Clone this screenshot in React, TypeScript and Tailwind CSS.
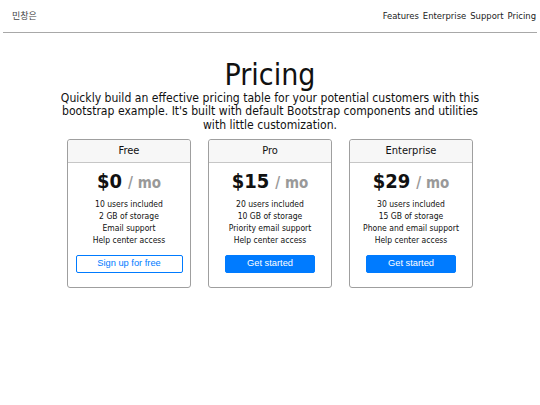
import React from "react";

const plans = [
  {
    name: "Free",
    price: "$0",
    features: ["10 users included", "2 GB of storage", "Email support", "Help center access"],
    cta: "Sign up for free",
    outline: true,
  },
  {
    name: "Pro",
    price: "$15",
    features: ["20 users included", "10 GB of storage", "Priority email support", "Help center access"],
    cta: "Get started",
    outline: false,
  },
  {
    name: "Enterprise",
    price: "$29",
    features: ["30 users included", "15 GB of storage", "Phone and email support", "Help center access"],
    cta: "Get started",
    outline: false,
  },
];

export default function App() {
  return (
    <div className="w-[540px] h-[405px] bg-white text-[#111] font-['DejaVu_Sans_Condensed','DejaVu_Sans',sans-serif]">
      <header className="flex items-center justify-between h-[33px] mx-[3px] px-[9px] border-b border-[#a8a8a8]">
        <span className="text-[9px] text-[#444] font-['Noto_Sans_CJK_KR',sans-serif]">민창은</span>
        <nav className="flex gap-[4px] text-[9.4px] text-[#222] -mr-[8px]">
          <span>Features</span>
          <span>Enterprise</span>
          <span>Support</span>
          <span>Pricing</span>
        </nav>
      </header>
      <div className="flex flex-col items-center pt-[25px]">
        <h1 className="text-[30px] leading-[34px]">Pricing</h1>
        <p className="w-[440px] text-center text-[12.1px] leading-[13.3px]">
          Quickly build an effective pricing table for your potential customers with this bootstrap example. It's built with default Bootstrap components and utilities with little customization.
        </p>
      </div>
      <div className="flex justify-center gap-[17px] mt-[7px]">
        {plans.map((p) => (
          <div key={p.name} className="w-[124px] border border-[#9f9f9f] rounded-[3px] flex flex-col">
            <div className="h-[23px] bg-[#f7f7f7] border-b border-[#c6c6c6] rounded-t-[3px] flex items-center justify-center text-[11px]">
              {p.name}
            </div>
            <div className="flex flex-col items-center pt-[5px] pb-[14px]">
              <div className="flex items-baseline">
                <span className="text-[20px] leading-[26px] font-bold">{p.price}</span>
                <span className="text-[15px] font-bold text-[#999] ml-[6px]">/ mo</span>
              </div>
              <ul className="mt-[5px] text-[8.5px] leading-[11.7px] text-center">
                {p.features.map((f) => (
                  <li key={f}>{f}</li>
                ))}
              </ul>
              <button
                className={
                  p.outline
                    ? "mt-[9px] w-[107px] h-[18px] border border-[#007bff] text-[#007bff] rounded-[2px] text-[9.3px] font-['Liberation_Sans',sans-serif]"
                    : "mt-[9px] w-[90px] h-[18px] bg-[#007bff] border border-[#007bff] text-white rounded-[2px] text-[9.3px] font-['Liberation_Sans',sans-serif]"
                }
              >
                {p.cta}
              </button>
            </div>
          </div>
        ))}
      </div>
    </div>
  );
}
